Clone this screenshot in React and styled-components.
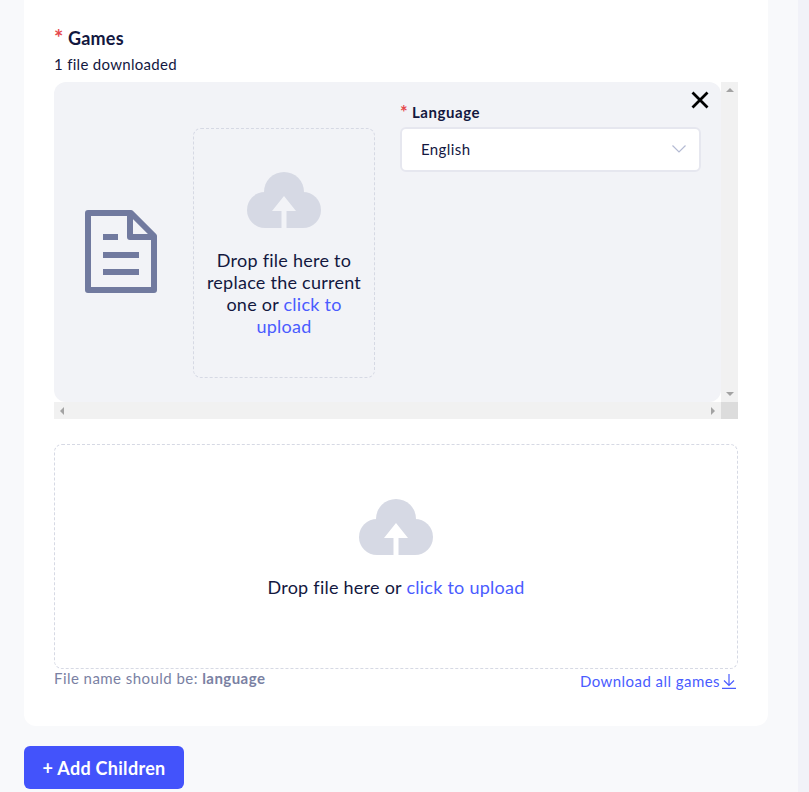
import styled, { createGlobalStyle } from "styled-components";

const GlobalStyle = createGlobalStyle`
  html, body {
    margin: 0;
    padding: 0;
    height: 792px;
    overflow: hidden;
    background: #f8f9fb;
    font-family: "Lato", "Liberation Sans", sans-serif;
    color: #13183f;
  }
`;

const CloudIcon = ({ arrow }) => (
  <svg width="74" height="56" viewBox="0 0 74 56">
    <g fill="#d6d9e4">
      <circle cx="37" cy="20" r="20" />
      <circle cx="18" cy="38" r="18" />
      <circle cx="56" cy="38" r="18" />
      <rect x="18" y="20" width="38" height="36" />
    </g>
    <path d="M37 24 L25 39 H34.5 V56 H39.5 V39 H49 Z" fill={arrow} />
  </svg>
);

const DocIcon = () => (
  <svg width="72" height="83" viewBox="0 0 72 83" fill="none" stroke="#717a9f" strokeWidth="6" strokeLinejoin="round">
    <path d="M3 3 H46 L69 26 V80 H3 Z" />
    <path d="M45 3 V27 H69" />
    <g fill="#717a9f" stroke="none">
      <rect x="18" y="24" width="15" height="6" />
      <rect x="18" y="42" width="36" height="6" />
      <rect x="18" y="59" width="36" height="6" />
    </g>
  </svg>
);

const App = () => {
  return (
    <>
      <GlobalStyle />
      <Page>
        <Main>
          <Card>
            <FieldLabel>
              <Star>*</Star>
              Games
            </FieldLabel>
            <Count>1 file downloaded</Count>
            <ScrollFrame>
              <Panel>
                <CloseButton>
                  <svg width="18" height="18" viewBox="0 0 18 18" stroke="#000" strokeWidth="2.8">
                    <path d="M1.5 1.5 L16.5 16.5 M16.5 1.5 L1.5 16.5" />
                  </svg>
                </CloseButton>
                <DocCell>
                  <DocIcon />
                </DocCell>
                <PanelDrop>
                  <CloudIcon arrow="#f2f3f7" />
                  <DropText>
                    Drop file here to replace the current one or <Link>click to upload</Link>
                  </DropText>
                </PanelDrop>
                <LanguageField>
                  <SmallLabel>
                    <Star $small>*</Star>
                    Language
                  </SmallLabel>
                  <Select>
                    English
                    <svg width="14" height="8" viewBox="0 0 14 8" fill="none" stroke="#b4bad3" strokeWidth="1.2">
                      <path d="M0.5 0.5 L7 7 L13.5 0.5" />
                    </svg>
                  </Select>
                </LanguageField>
              </Panel>
              <VerticalRail>
                <Arrow $dir="up" />
                <Arrow $dir="down" />
              </VerticalRail>
              <HorizontalRail>
                <Arrow $dir="left" />
                <Arrow $dir="right" />
              </HorizontalRail>
              <RailCorner />
            </ScrollFrame>
            <MainDrop>
              <CloudIcon arrow="#fff" />
              <DropText>
                Drop file here or <Link>click to upload</Link>
              </DropText>
            </MainDrop>
            <Footer>
              <Hint>
                File name should be: <b>language</b>
              </Hint>
              <Download>
                Download all games
                <svg width="14" height="15" viewBox="0 0 14 15" fill="none" stroke="#4a5cff" strokeWidth="1.2">
                  <path d="M7 0 V11 M2 6.5 L7 11.5 L12 6.5 M0 14.4 H14" />
                </svg>
              </Download>
            </Footer>
          </Card>
          <AddButton>+ Add Children</AddButton>
        </Main>
        <SideStrip />
      </Page>
    </>
  );
};

export default App;

const Page = styled.div`
  display: flex;
  height: 792px;
`;
const Main = styled.div`
  width: 744px;
  margin-left: 24px;
  margin-right: 30px;
`;
const SideStrip = styled.div`
  width: 11px;
  background: #f1f2f8;
`;
const Card = styled.div`
  box-sizing: border-box;
  height: 726px;
  padding: 28px 30px 0;
  background: #fff;
  border-radius: 0 0 12px 12px;
`;
const FieldLabel = styled.div`
  display: flex;
  font-size: 18px;
  line-height: 20px;
  font-weight: 700;
  letter-spacing: 0.2px;
`;
const Star = styled.span`
  width: ${(p) => (p.$small ? "12px" : "14px")};
  color: #e5484d;
  font-size: ${(p) => (p.$small ? "18px" : "22px")};
`;
const Count = styled.div`
  margin-top: 8px;
  font-size: 15px;
  line-height: 17px;
  letter-spacing: 0.3px;
`;
const ScrollFrame = styled.div`
  display: grid;
  grid-template-columns: 667px 17px;
  grid-template-rows: 320px 17px;
  margin-top: 9px;
`;
const Panel = styled.div`
  position: relative;
  display: grid;
  grid-template-columns: 72px 182px 300px;
  column-gap: 36px;
  align-items: start;
  box-sizing: border-box;
  padding: 22px 0 0 31px;
  background: #f2f3f7;
  border-radius: 12px;
`;
const CloseButton = styled.div`
  position: absolute;
  top: 9px;
  right: 12px;
  display: flex;
`;
const DocCell = styled.div`
  display: flex;
  padding-top: 106px;
`;
const PanelDrop = styled.div`
  display: flex;
  flex-direction: column;
  align-items: center;
  box-sizing: border-box;
  height: 250px;
  margin-top: 24px;
  padding: 43px 8px 0;
  border: 1px dashed #d6d9e4;
  border-radius: 8px;
`;
const DropText = styled.div`
  margin-top: 21px;
  font-size: 18px;
  line-height: 22px;
  letter-spacing: 0.25px;
  text-align: center;
`;
const Link = styled.span`
  color: #4a5cff;
`;
const LanguageField = styled.div`
  width: 300px;
  margin-left: -11px;
  margin-top: -1px;
`;
const SmallLabel = styled.div`
  display: flex;
  font-size: 15px;
  line-height: 18px;
  font-weight: 700;
  letter-spacing: 0.55px;
`;
const Select = styled.div`
  display: flex;
  align-items: center;
  justify-content: space-between;
  box-sizing: border-box;
  width: 301px;
  height: 45px;
  margin-top: 6px;
  padding: 0 13px 1px 19px;
  background: #fff;
  border: 2px solid #e6e7ef;
  border-radius: 6px;
  font-size: 15px;
  letter-spacing: 0.4px;
`;
const VerticalRail = styled.div`
  display: flex;
  flex-direction: column;
  align-items: center;
  justify-content: space-between;
  padding: 6px 0;
  background: #f1f1f1;
`;
const HorizontalRail = styled.div`
  display: flex;
  align-items: center;
  justify-content: space-between;
  padding: 0 6px;
  background: #f1f1f1;
`;
const RailCorner = styled.div`
  background: #dcdcdc;
`;
const arrowBorders = {
  up: "border-width: 0 4px 4px; border-color: transparent transparent #a3a3a3;",
  down: "border-width: 4px 4px 0; border-color: #a3a3a3 transparent transparent;",
  left: "border-width: 4px 4px 4px 0; border-color: transparent #a3a3a3 transparent transparent;",
  right: "border-width: 4px 0 4px 4px; border-color: transparent transparent transparent #a3a3a3;",
};
const Arrow = styled.span`
  width: 0;
  height: 0;
  border-style: solid;
  ${(p) => arrowBorders[p.$dir]}
`;
const MainDrop = styled.div`
  display: flex;
  flex-direction: column;
  align-items: center;
  box-sizing: border-box;
  height: 225px;
  margin-top: 25px;
  padding-top: 54px;
  border: 1px dashed #d6d9e4;
  border-radius: 8px;
`;
const Footer = styled.div`
  display: flex;
  justify-content: space-between;
  align-items: flex-start;
  padding-right: 2px;
  font-size: 15px;
  line-height: 18px;
  letter-spacing: 0.45px;
`;
const Hint = styled.div`
  color: #7a81a3;
`;
const Download = styled.div`
  display: flex;
  align-items: center;
  gap: 2px;
  margin-top: 3px;
  color: #4a5cff;
`;
const AddButton = styled.button`
  display: block;
  width: 160px;
  height: 43px;
  margin-top: 20px;
  padding: 0;
  background: #4353fb;
  border: none;
  border-radius: 6px;
  color: #fff;
  font-family: inherit;
  font-size: 18px;
  font-weight: 700;
  letter-spacing: 0.3px;
`;
